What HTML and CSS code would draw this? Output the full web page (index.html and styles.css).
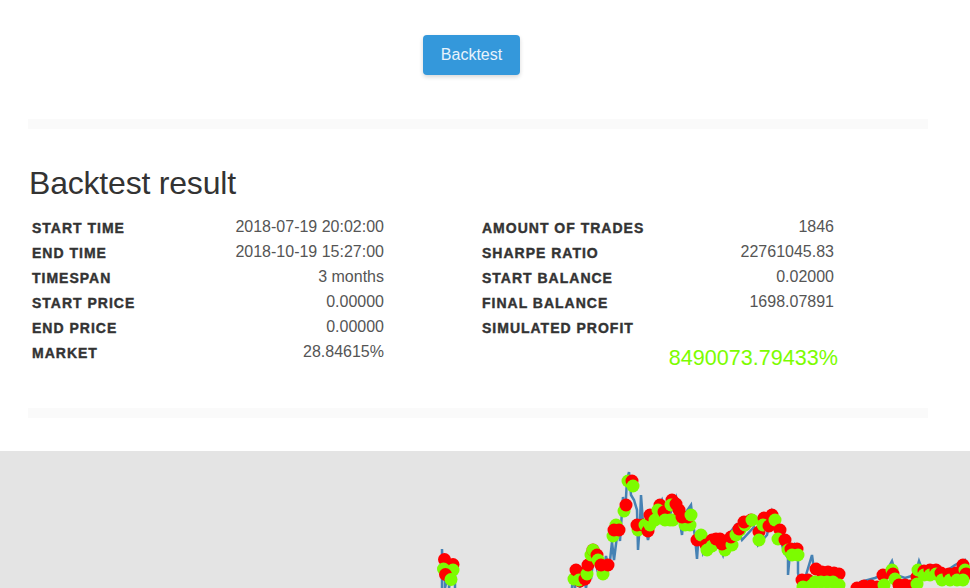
FILE: index.html
```html
<!DOCTYPE html>
<html lang="en">
<head>
    <meta charset="UTF-8">
    <meta name="viewport" content="width=device-width, initial-scale=1.0">
    <title>Backtest result</title>
    <link rel="stylesheet" href="styles.css">
</head>
<body>

    <div class="container">
        <div class="actions">
            <button class="button">Backtest</button>
        </div>

        <div class="divider"></div>

        <h2>Backtest result</h2>

        <div class="columns">
            <table class="stats">
                <tr><th>Start time</th><td>2018-07-19 20:02:00</td></tr>
                <tr><th>End time</th><td>2018-10-19 15:27:00</td></tr>
                <tr><th>Timespan</th><td>3 months</td></tr>
                <tr><th>Start price</th><td>0.00000</td></tr>
                <tr><th>End price</th><td>0.00000</td></tr>
                <tr><th>Market</th><td>28.84615%</td></tr>
            </table>
            <div>
                <table class="stats">
                    <tr><th>Amount of trades</th><td>1846</td></tr>
                    <tr><th>Sharpe ratio</th><td>22761045.83</td></tr>
                    <tr><th>Start balance</th><td>0.02000</td></tr>
                    <tr><th>Final balance</th><td>1698.07891</td></tr>
                    <tr><th>Simulated profit</th><td></td></tr>
                </table>
                <p class="profit">8490073.79433%</p>
            </div>
        </div>

        <div class="divider"></div>
    </div>

    <div class="chart">
        <svg viewBox="0 451 970 137" width="970" height="137">
            <path class="price" d="M442 588V549L443 575 445 566V588L449 570V588L452 572 455 562V588"/>
            <path class="price" d="M572 588L573 570 575 588 578 565 580 588 583 574 586 588 589 570 591 579 594 552 597 568 600 560 603 574 606 556 609 570 612 542 614 560 618 528 620 541 623 497 625 515 627 480 629 472 631 495 634 500 637 510 638 550 640 522 641 495 643 523 646 530 648 540 652 522 656 512 662 500 668 520 676 498 682 535 684 515 691 505 693 523 695 537 697 559 699 530 703 553 708 542 716 536 723 555 728 535 736 525 742 540 754 527 758 545 767 535 772 512 778 530 784 552 788 558V575L790 552 794 545 798 560V573L802 590 806 575 812 555 814 570 817 565 820 572 830 568 840 575 843 592H855L860 582 875 578 885 574 892 561 896 575 905 578 915 575 919 561 923 572 935 566 945 572 955 565 965 560 970 572"/>

            <circle class="sell" cx="444.5" cy="559.5" r="6"/>
            <circle class="sell" cx="453" cy="564.5" r="6"/>
            <circle class="buy" cx="443.5" cy="569" r="6"/>
            <circle class="buy" cx="453" cy="570" r="6"/>
            <circle class="sell" cx="445.5" cy="574.5" r="6"/>
            <circle class="buy" cx="451" cy="579.5" r="6"/>

            <circle class="buy" cx="574" cy="579" r="6"/>
            <circle class="sell" cx="576" cy="570" r="6"/>
            <circle class="sell" cx="580" cy="573" r="6"/>
            <circle class="sell" cx="580" cy="581" r="6"/>
            <circle class="buy" cx="579" cy="580" r="6"/>
            <circle class="sell" cx="585" cy="579" r="6"/>
            <circle class="buy" cx="587" cy="574" r="6"/>
            <circle class="sell" cx="588" cy="565" r="6"/>
            <circle class="buy" cx="591" cy="555" r="6"/>
            <circle class="sell" cx="593" cy="550" r="6"/>
            <circle class="buy" cx="593" cy="550" r="6"/>
            <circle class="sell" cx="597" cy="555" r="6"/>
            <circle class="buy" cx="598" cy="560" r="6"/>
            <circle class="buy" cx="603" cy="574" r="6"/>
            <circle class="sell" cx="601" cy="565" r="6"/>
            <circle class="sell" cx="608" cy="565" r="6"/>

            <circle class="buy" cx="613" cy="536" r="6"/>
            <circle class="buy" cx="616" cy="525" r="6"/>
            <circle class="sell" cx="614" cy="530" r="6"/>
            <circle class="sell" cx="619" cy="530" r="6"/>
            <circle class="buy" cx="624" cy="511" r="6"/>
            <circle class="sell" cx="626" cy="505" r="6"/>
            <circle class="buy" cx="628" cy="481" r="6"/>
            <circle class="sell" cx="632" cy="481" r="6"/>
            <circle class="buy" cx="633" cy="486" r="6"/>

            <circle class="buy" cx="638" cy="530" r="6"/>
            <circle class="sell" cx="637" cy="525" r="6"/>
            <circle class="sell" cx="643" cy="525" r="6"/>
            <circle class="buy" cx="645" cy="525" r="6"/>
            <circle class="sell" cx="648" cy="531" r="6"/>
            <circle class="buy" cx="650" cy="525" r="6"/>
            <circle class="sell" cx="650" cy="515" r="6"/>
            <circle class="buy" cx="655" cy="520" r="6"/>
            <circle class="sell" cx="660" cy="505" r="6"/>
            <circle class="buy" cx="658" cy="510" r="6"/>
            <circle class="sell" cx="664" cy="512" r="6"/>
            <circle class="buy" cx="665" cy="520" r="6"/>
            <circle class="buy" cx="670" cy="520" r="6"/>
            <circle class="buy" cx="673" cy="520" r="6"/>
            <circle class="sell" cx="672" cy="500" r="6"/>
            <circle class="buy" cx="671" cy="505" r="6"/>
            <circle class="sell" cx="676" cy="504" r="6"/>
            <circle class="sell" cx="679" cy="510" r="6"/>
            <circle class="buy" cx="685" cy="525" r="6"/>
            <circle class="buy" cx="690" cy="525" r="6"/>
            <circle class="sell" cx="682" cy="517" r="6"/>
            <circle class="sell" cx="688" cy="517" r="6"/>
            <circle class="buy" cx="691" cy="515" r="6"/>
            <circle class="sell" cx="697" cy="540" r="6"/>
            <circle class="buy" cx="701" cy="535" r="6"/>

            <circle class="sell" cx="706" cy="545" r="6"/>
            <circle class="buy" cx="707" cy="550" r="6"/>
            <circle class="sell" cx="712" cy="540" r="6"/>
            <circle class="buy" cx="712" cy="546" r="6"/>
            <circle class="sell" cx="716" cy="539" r="6"/>
            <circle class="sell" cx="720" cy="539" r="6"/>
            <circle class="buy" cx="725" cy="550" r="6"/>
            <circle class="sell" cx="722" cy="544" r="6"/>
            <circle class="sell" cx="728" cy="542" r="6"/>
            <circle class="buy" cx="732" cy="545" r="6"/>
            <circle class="sell" cx="731" cy="537" r="6"/>
            <circle class="buy" cx="736" cy="535" r="6"/>
            <circle class="buy" cx="740" cy="530" r="6"/>
            <circle class="sell" cx="739" cy="529" r="6"/>
            <circle class="buy" cx="745" cy="525" r="6"/>
            <circle class="sell" cx="744" cy="522" r="6"/>
            <circle class="sell" cx="751" cy="520" r="6"/>
            <circle class="buy" cx="752" cy="520" r="6"/>
            <circle class="sell" cx="759" cy="532" r="6"/>
            <circle class="buy" cx="759" cy="540" r="6"/>
            <circle class="sell" cx="764" cy="518" r="6"/>
            <circle class="buy" cx="763" cy="525" r="6"/>
            <circle class="sell" cx="769" cy="526" r="6"/>
            <circle class="sell" cx="772" cy="515" r="6"/>
            <circle class="buy" cx="775" cy="520" r="6"/>
            <circle class="sell" cx="780" cy="530" r="6"/>
            <circle class="buy" cx="778" cy="539" r="6"/>
            <circle class="sell" cx="785" cy="540" r="6"/>
            <circle class="buy" cx="788" cy="550" r="6"/>
            <circle class="sell" cx="791" cy="549" r="6"/>
            <circle class="sell" cx="797" cy="549" r="6"/>
            <circle class="buy" cx="792" cy="555" r="6"/>
            <circle class="buy" cx="798" cy="555" r="6"/>

            <circle class="sell" cx="802" cy="580" r="6"/>
            <circle class="sell" cx="808" cy="580" r="6"/>
            <circle class="buy" cx="803" cy="587" r="6"/>
            <circle class="buy" cx="811" cy="586" r="6"/>
            <circle class="sell" cx="816" cy="569" r="6"/>
            <circle class="sell" cx="822" cy="572" r="6"/>
            <circle class="sell" cx="828" cy="572" r="6"/>
            <circle class="sell" cx="834" cy="573" r="6"/>
            <circle class="sell" cx="839" cy="574" r="6"/>
            <circle class="buy" cx="815" cy="582" r="6"/>
            <circle class="buy" cx="821" cy="582" r="6"/>
            <circle class="buy" cx="827" cy="582" r="6"/>
            <circle class="buy" cx="833" cy="582" r="6"/>
            <circle class="buy" cx="839" cy="585" r="6"/>

            <circle class="sell" cx="857" cy="588" r="6"/>
            <circle class="sell" cx="864" cy="586" r="6"/>
            <circle class="sell" cx="871" cy="586" r="6"/>
            <circle class="sell" cx="877" cy="587" r="6"/>
            <circle class="sell" cx="883" cy="575" r="6"/>
            <circle class="buy" cx="884" cy="585" r="6"/>
            <circle class="buy" cx="892" cy="570" r="6"/>
            <circle class="sell" cx="893" cy="574" r="6"/>
            <circle class="buy" cx="895" cy="579" r="6"/>
            <circle class="sell" cx="899" cy="585" r="6"/>
            <circle class="sell" cx="905" cy="585" r="6"/>
            <circle class="sell" cx="910" cy="586" r="6"/>
            <circle class="sell" cx="917" cy="577" r="6"/>
            <circle class="buy" cx="917" cy="584" r="6"/>
            <circle class="buy" cx="918" cy="570" r="6"/>
            <circle class="sell" cx="924" cy="571" r="6"/>
            <circle class="buy" cx="924" cy="575" r="6"/>
            <circle class="sell" cx="930" cy="570" r="6"/>
            <circle class="buy" cx="930" cy="575" r="6"/>
            <circle class="sell" cx="936" cy="570" r="6"/>
            <circle class="buy" cx="936" cy="574" r="6"/>
            <circle class="sell" cx="941" cy="573" r="6"/>
            <circle class="buy" cx="942" cy="580" r="6"/>
            <circle class="sell" cx="949" cy="574" r="6"/>
            <circle class="buy" cx="950" cy="580" r="6"/>
            <circle class="sell" cx="956" cy="573" r="6"/>
            <circle class="buy" cx="957" cy="580" r="6"/>
            <circle class="sell" cx="963" cy="565" r="6"/>
            <circle class="buy" cx="965" cy="570" r="6"/>
            <circle class="sell" cx="966" cy="574" r="6"/>
            <circle class="buy" cx="963" cy="580" r="6"/>
        </svg>
    </div>

</body>
</html>
```

FILE: styles.css
```css
body {
    margin: 0;
    background-color: white;
    color: #333;
    font-family: "Liberation Sans", Arial, sans-serif;
    font-size: 16px;
    overflow: hidden;
}
.container {
    width: 900px;
    margin: 0 28px;
    height: 451px;
}
.actions {
    padding: 35px 0 44px;
    text-align: center;
    height: 40px;
}
.button {
    display: inline-block;
    width: 97px;
    height: 40px;
    margin-right: 13px;
    padding: 0;
    font: inherit;
    background-color: #3498db;
    color: #e8f3fb;
    border: none;
    border-radius: 4px;
    box-shadow: 0 2px 4px rgba(0, 0, 0, 0.16);
    cursor: pointer;
}
.divider {
    height: 10px;
    background-color: #fafafa;
}
h2 {
    margin: 36px 0 14px 1px;
    font-size: 32px;
    font-weight: normal;
    line-height: 36px;
    letter-spacing: -0.2px;
}
.columns {
    display: grid;
    grid-template-columns: 450px 360px;
    align-items: start;
    height: 193px;
}
.stats {
    width: 360px;
    border-collapse: collapse;
}
.stats th,
.stats td {
    height: 25px;
    padding: 0 4px;
    box-sizing: border-box;
}
.stats th {
    text-align: left;
    font-size: 14px;
    font-weight: bold;
    letter-spacing: 1px;
    text-transform: uppercase;
    -webkit-text-stroke: 0.4px #333;
    padding-top: 1px;
}
.stats td {
    text-align: right;
    padding-bottom: 2px;
    color: #555;
}
.profit {
    margin: 5px 0 0;
    font-size: 21.6px;
    line-height: 26px;
    text-align: right;
    color: #7cfc00;
}
.chart {
    height: 137px;
    background-color: #e4e4e4;
}
.chart svg {
    display: block;
}
.price {
    fill: none;
    stroke: #4682b4;
    stroke-width: 2.5;
}
.sell,
.buy {
    r: 6.5px;
}
.sell {
    fill: #ff0000;
}
.buy {
    fill: #7cfc00;
}
```
